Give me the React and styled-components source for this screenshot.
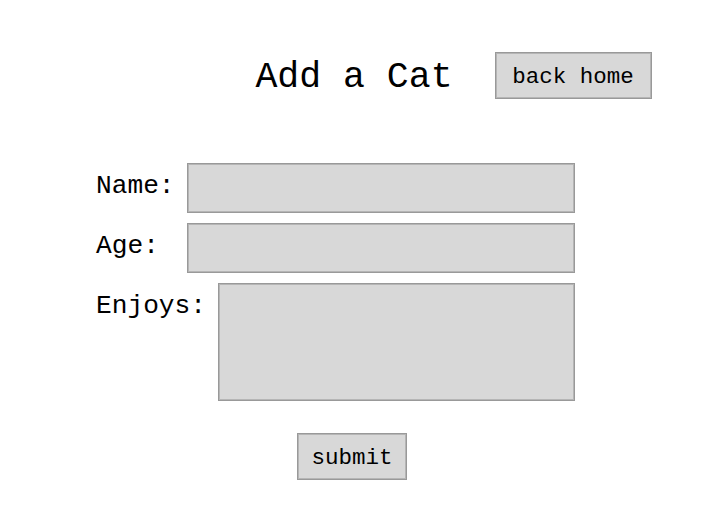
import React from "react";
import styled, { createGlobalStyle } from "styled-components";

const Global = createGlobalStyle`
  html, body { margin: 0; padding: 0; background: #fff; }
  body { font-family: "Liberation Mono", "DejaVu Sans Mono", monospace; color: #000; }
`;

const Page = styled.div`
  width: 708px;
  height: 514px;
  box-sizing: border-box;
  padding-top: 52px;
`;

const Header = styled.header`
  display: grid;
  grid-template-columns: 1fr auto 1fr;
  align-items: start;
`;

const Title = styled.h1`
  grid-column: 2;
  margin: 0;
  padding-top: 3px;
  font-weight: 400;
  font-size: 36.5px;
  line-height: 46px;
  letter-spacing: 0;
`;

const Button = styled.button`
  box-sizing: border-box;
  height: 47px;
  padding: 2px 0 0;
  font-family: inherit;
  font-size: 22.5px;
  color: #000;
  background: #d8d8d8;
  border: 1px solid #999;
  box-shadow: inset 0 0 0 1px #b5b5b5;
  border-radius: 0;
  text-align: center;
`;

const HomeButton = styled(Button)`
  grid-column: 3;
  justify-self: start;
  margin-left: 42px;
  width: 157px;
`;

const Form = styled.form`
  display: flex;
  flex-direction: column;
  gap: 10px;
  margin: 62px 0 0 96px;
  width: 479px;
`;

const Row = styled.div`
  display: flex;
  align-items: flex-start;
  gap: 12px;
`;

const Label = styled.label`
  font-size: 26.2px;
  line-height: 30px;
  padding-top: 8px;
  min-width: ${(p) => p.$ch || 0}ch;
  white-space: pre;
`;

const fieldCss = `
  box-sizing: border-box;
  flex: 1;
  min-width: 0;
  background: #d8d8d8;
  border: 1px solid #999;
  box-shadow: inset 0 0 0 1px #b5b5b5;
  border-radius: 0;
  font-family: inherit;
  font-size: 20px;
  margin: 0;
  padding: 4px 8px;
  outline: none;
`;

const Input = styled.input`
  ${fieldCss}
  height: ${(p) => p.$h}px;
`;

const TextArea = styled.textarea`
  ${fieldCss}
  height: 118px;
  resize: none;
`;

const Actions = styled.div`
  display: flex;
  padding-left: 297px;
  margin-top: 32px;
`;

const SubmitButton = styled(Button)`
  width: 110px;
`;

export default function App() {
  return (
    <Page>
      <Global />
      <Header>
        <Title>Add a Cat</Title>
        <HomeButton type="button">back home</HomeButton>
      </Header>
      <Form onSubmit={(e) => e.preventDefault()}>
        <Row>
          <Label htmlFor="name">Name:</Label>
          <Input id="name" $h={50} />
        </Row>
        <Row>
          <Label htmlFor="age" $ch={5}>Age:</Label>
          <Input id="age" $h={50} />
        </Row>
        <Row>
          <Label htmlFor="enjoys">Enjoys:</Label>
          <TextArea id="enjoys" />
        </Row>
      </Form>
      <Actions>
        <SubmitButton type="submit">submit</SubmitButton>
      </Actions>
    </Page>
  );
}
